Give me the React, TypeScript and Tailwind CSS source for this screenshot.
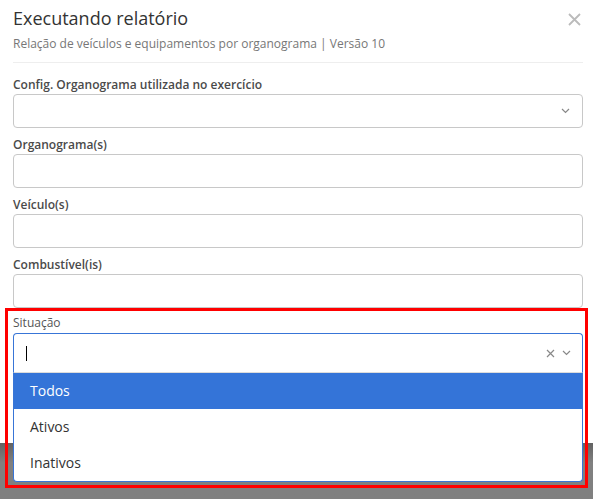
import React from "react";

const Chevron = ({ className }: { className?: string }) => (
  <svg className={className} width="9" height="6" viewBox="0 0 9 6" fill="none">
    <path d="M1 1l3.5 3.5L8 1" stroke="#888" strokeWidth="1.2" />
  </svg>
);

function Field({ label, chevron }: { label: string; chevron?: boolean }) {
  return (
    <div className="mb-[8px]">
      <div className="h-[18px] text-[12px] leading-[18px] font-semibold text-[#4a4a4a]">{label}</div>
      <div className="relative h-[34px] rounded-[4px] border border-[#c8c8c8] bg-white">
        {chevron && (
          <div className="absolute right-[12px] top-[13px]">
            <Chevron />
          </div>
        )}
      </div>
    </div>
  );
}

export default function App() {
  return (
    <div
      className="relative flex h-[499px] w-[593px] flex-col overflow-hidden bg-[#808080]"
      style={{ fontFamily: '"Open Sans", "Noto Sans", sans-serif' }}
    >
      <div className="relative h-[443px] shrink-0 bg-white pl-[13px] pr-[10px] pt-[6px]">
        <div className="text-[18px] leading-6 text-[#333]">Executando relatório</div>
        <div className="mt-[6px] text-[12px] leading-4 text-[#777]">
          Relação de veículos e equipamentos por organograma | Versão 10
        </div>
        <div className="mt-[10px] h-px bg-[#eeeeee]" />
        <button className="absolute right-[12px] top-[13px]">
          <svg width="13" height="13" viewBox="0 0 13 13">
            <path d="M1 1l11 11M12 1L1 12" stroke="#bbb" strokeWidth="1.8" />
          </svg>
        </button>

        <div className="mt-[13px]">
          <Field label="Config. Organograma utilizada no exercício" chevron />
          <Field label="Organograma(s)" />
          <Field label="Veículo(s)" />
          <div className="mb-[7px]">
            <div className="h-[18px] text-[12px] leading-[18px] font-semibold text-[#4a4a4a]">Combustível(is)</div>
            <div className="h-[34px] rounded-[4px] border border-[#c8c8c8] bg-white" />
          </div>
          <div>
            <div className="mb-[2px] h-4 text-[12px] leading-4 text-[#555]">Situação</div>
            <div className="relative">
              <div className="flex h-[39px] items-center rounded-t-[4px] border-x border-t border-[#3875d7] bg-white pl-[12px] pr-[11px]">
                <div className="h-[15px] w-px bg-black" />
                <div className="flex-1" />
                <svg width="9" height="9" viewBox="0 0 9 9" className="mr-[7px]">
                  <path d="M1 1l7 7M8 1L1 8" stroke="#888" strokeWidth="1.2" />
                </svg>
                <Chevron />
              </div>
              <div className="absolute left-0 right-0 top-full z-10 rounded-b-[4px] border-x border-b border-t border-x-[#3875d7] border-b-[#3875d7] border-t-[#dcdcdc] bg-white text-[14px] leading-[36px] text-[#333]">
                <div className="h-[36px] bg-[#3474d8] pl-[16px] text-white">Todos</div>
                <div className="h-[36px] pl-[16px]">Ativos</div>
                <div className="h-[36px] pl-[16px]">Inativos</div>
              </div>
            </div>
          </div>
        </div>
      </div>
      <div className="flex-1 bg-linear-to-b from-[#626262] to-[#808080] to-[35%]" />

      <div className="pointer-events-none absolute left-[5px] top-[308px] z-20 h-[180px] w-[583px] border-[3px] border-[#ff0000]" />
    </div>
  );
}
